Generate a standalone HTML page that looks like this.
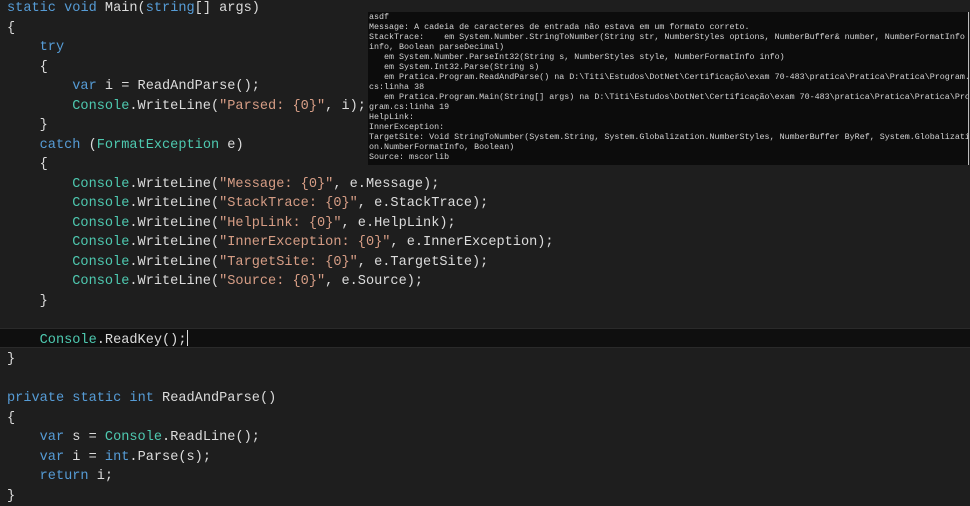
<!DOCTYPE html>
<html><head><meta charset="utf-8"><style>
html,body{margin:0;padding:0;width:970px;height:505px;overflow:hidden;background:#1e1e1e}
#code{position:absolute;left:7px;top:-1px;font-family:"Liberation Mono",monospace;font-size:13.6px;line-height:19.5px;color:#dcdcdc;white-space:pre;margin:0}
.k{color:#569cd6}.t{color:#4ec9b0}.s{color:#d69d85}
#hl{position:absolute;left:0;top:328px;width:970px;height:18px;background:#0f0f0f;border-top:1px solid #2a2a2a;border-bottom:1px solid #2a2a2a}
#caret{position:absolute;left:187px;top:330px;width:1px;height:16px;background:#dcdcdc}
#con{position:absolute;left:368px;top:12px;width:600px;height:153px;background:#0c0c0c;border-right:1px solid #bbb;overflow:hidden}
#con pre{margin:0;padding:0 0 0 1px;font-family:"Liberation Mono",monospace;font-size:8.35px;line-height:10px;color:#d4d4d4;white-space:pre}
</style></head><body>
<div id="hl"></div>
<pre id="code"><span class="k">static</span> <span class="k">void</span> Main(<span class="k">string</span>[] args)
{
    <span class="k">try</span>
    {
        <span class="k">var</span> i = ReadAndParse();
        <span class="t">Console</span>.WriteLine(<span class="s">"Parsed: {0}"</span>, i);
    }
    <span class="k">catch</span> (<span class="t">FormatException</span> e)
    {
        <span class="t">Console</span>.WriteLine(<span class="s">"Message: {0}"</span>, e.Message);
        <span class="t">Console</span>.WriteLine(<span class="s">"StackTrace: {0}"</span>, e.StackTrace);
        <span class="t">Console</span>.WriteLine(<span class="s">"HelpLink: {0}"</span>, e.HelpLink);
        <span class="t">Console</span>.WriteLine(<span class="s">"InnerException: {0}"</span>, e.InnerException);
        <span class="t">Console</span>.WriteLine(<span class="s">"TargetSite: {0}"</span>, e.TargetSite);
        <span class="t">Console</span>.WriteLine(<span class="s">"Source: {0}"</span>, e.Source);
    }

    <span class="t">Console</span>.ReadKey();
}

<span class="k">private</span> <span class="k">static</span> <span class="k">int</span> ReadAndParse()
{
    <span class="k">var</span> s = <span class="t">Console</span>.ReadLine();
    <span class="k">var</span> i = <span class="k">int</span>.Parse(s);
    <span class="k">return</span> i;
}</pre>
<div id="caret"></div>
<div id="con"><pre>asdf
Message: A cadeia de caracteres de entrada não estava em um formato correto.
StackTrace:    em System.Number.StringToNumber(String str, NumberStyles options, NumberBuffer&amp; number, NumberFormatInfo
info, Boolean parseDecimal)
   em System.Number.ParseInt32(String s, NumberStyles style, NumberFormatInfo info)
   em System.Int32.Parse(String s)
   em Pratica.Program.ReadAndParse() na D:\Titi\Estudos\DotNet\Certificação\exam 70-483\pratica\Pratica\Pratica\Program.
cs:linha 38
   em Pratica.Program.Main(String[] args) na D:\Titi\Estudos\DotNet\Certificação\exam 70-483\pratica\Pratica\Pratica\Pro
gram.cs:linha 19
HelpLink:
InnerException:
TargetSite: Void StringToNumber(System.String, System.Globalization.NumberStyles, NumberBuffer ByRef, System.Globalizati
on.NumberFormatInfo, Boolean)
Source: mscorlib</pre></div>
</body></html>
